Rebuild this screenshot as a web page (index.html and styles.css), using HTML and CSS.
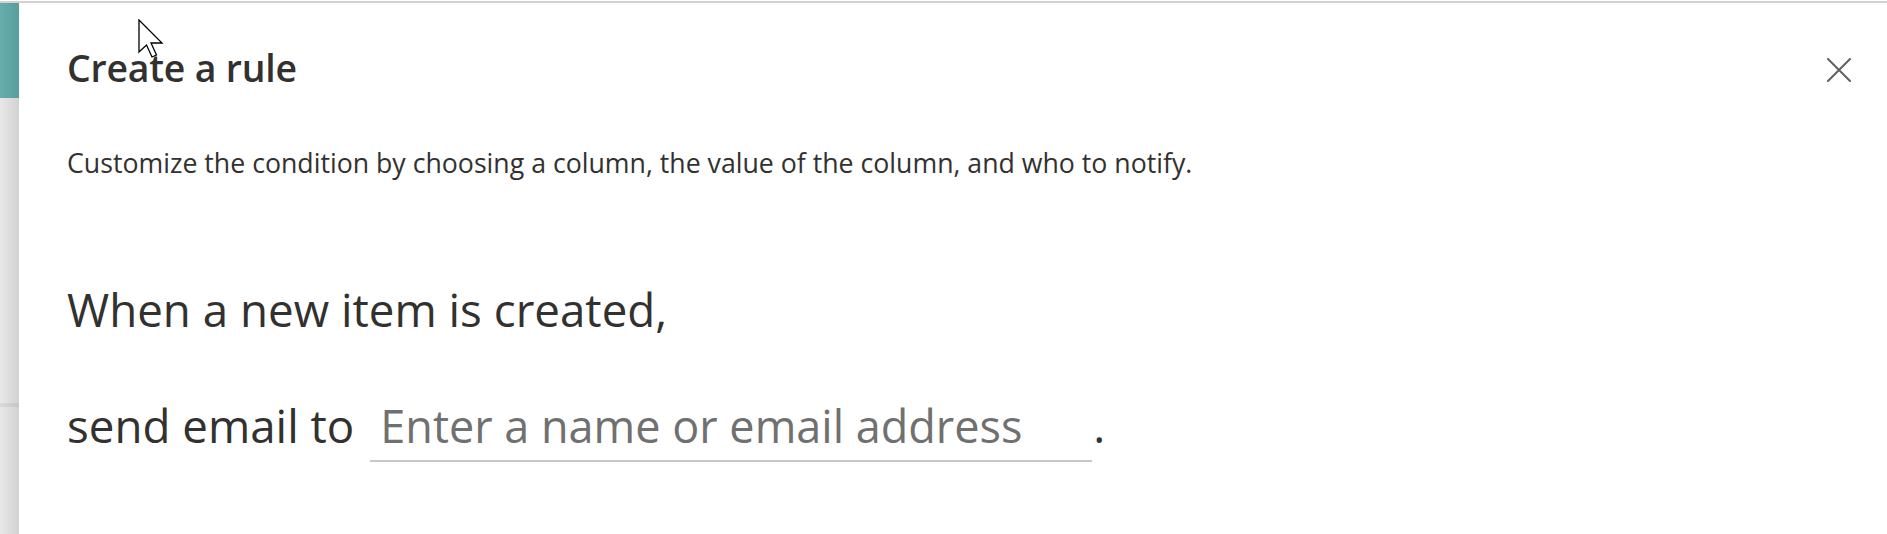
FILE: index.html
```html
<!DOCTYPE html>
<html lang="en">
<head>
<meta charset="utf-8">
<title>Create a rule</title>
<link rel="stylesheet" href="styles.css">
</head>
<body>
<div class="page">
  <div class="topline"></div>
  <div class="main">
    <aside class="sidebar">
      <div class="sidebar-accent"></div>
      <div class="sidebar-rest">
        <div class="sidebar-divider"></div>
      </div>
    </aside>
    <section class="panel">
      <header class="panel-header">
        <h1 class="panel-title">Create a rule</h1>
        <button class="close-btn" aria-label="Close">
          <svg width="24" height="24" viewBox="0 0 24 24"><path d="M1 1 L23 23 M23 1 L1 23" stroke="#616161" stroke-width="2" fill="none" stroke-linecap="round"/></svg>
        </button>
      </header>
      <p class="panel-desc">Customize the condition by choosing a column, the value of the column, and who to notify.</p>
      <div class="rule">
        <div class="rule-line">When a new item is created,</div>
        <div class="rule-line rule-send">
          <span>send email to</span>
          <input class="people-input" type="text" placeholder="Enter a name or email address">
          <span class="period">.</span>
        </div>
      </div>
    </section>
  </div>
  <svg class="cursor" width="26" height="40" viewBox="0 0 26 40"><path d="M1 1 L1 33 L8.5 26 L14 38 L18.5 36 L13 24 L24 24 Z" fill="#fff" stroke="#000" stroke-width="1.3" stroke-linejoin="miter"/></svg>
</div>
</body>
</html>
```

FILE: styles.css
```css
* { box-sizing: border-box; }
html, body { margin: 0; padding: 0; background: #fff; }
body {
  font-family: "Open Sans", "Noto Sans", sans-serif;
  color: #323130;
  width: 1887px;
  height: 534px;
  overflow: hidden;
}
.page {
  position: relative;
  height: 534px;
  padding-top: 1px;
  display: flex;
  flex-direction: column;
}
.topline {
  height: 2px;
  background: #d2d2d2;
  flex: none;
}
.main {
  flex: 1;
  display: flex;
}
.sidebar {
  width: 19px;
  flex: none;
  display: flex;
  flex-direction: column;
}
.sidebar-accent {
  height: 95px;
  background: linear-gradient(to right, #66adac, #579f9e);
}
.sidebar-rest {
  flex: 1;
  background: linear-gradient(to right, #e8e8e8, #d2d2d2);
  padding-top: 305px;
}
.sidebar-divider {
  height: 4px;
  background: rgba(0,0,0,0.06);
}
.panel {
  flex: 1;
  padding: 41px 36px 0 48px;
}
.panel-header {
  display: flex;
  justify-content: space-between;
  align-items: center;
}
.panel-title {
  margin: 0;
  font-size: 37.4px;
  line-height: 48px;
  font-weight: 600;
  letter-spacing: -0.2px;
}
.close-btn {
  border: none;
  background: none;
  padding: 0;
  width: 24px;
  height: 24px;
  display: flex;
  margin-top: 4px;
}
.panel-desc {
  margin: 55px 0 0 0;
  font-size: 26.7px;
  line-height: 32px;
}
.rule {
  margin-top: 100px;
  display: flex;
  flex-direction: column;
  gap: 56px;
}
.rule-line {
  font-size: 45.7px;
  line-height: 60px;
}
.rule-send {
  display: flex;
  align-items: baseline;
}
.people-input {
  margin-left: 16px;
  width: 722px;
  border: none;
  border-bottom: 2px solid #c8c8c8;
  outline: none;
  font: inherit;
  font-size: 45px;
  line-height: 60px;
  height: 66px;
  padding: 0 0 4px 10px;
  color: #323130;
  background: transparent;
}
.people-input::placeholder { color: #707070; }
.period {
  margin-left: 1px;
}
.cursor {
  position: absolute;
  left: 138px;
  top: 19px;
}
```
